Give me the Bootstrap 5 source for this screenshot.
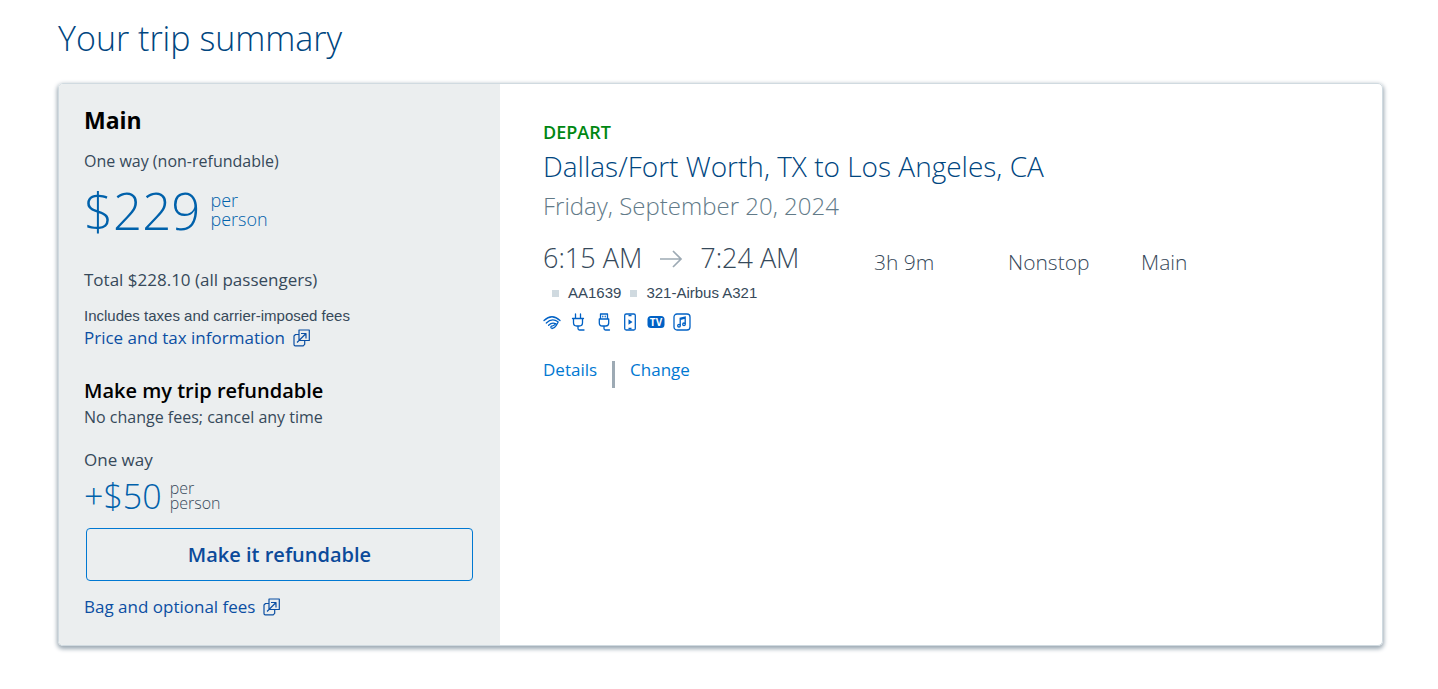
<!DOCTYPE html>
<html lang="en">
<head>
<meta charset="utf-8">
<meta name="viewport" content="width=device-width, initial-scale=1">
<title>Your trip summary</title>
<link href="https://cdn.jsdelivr.net/npm/bootstrap@5.3.0/dist/css/bootstrap.min.css" rel="stylesheet">
<style>
body{font-family:"Open Sans","Noto Sans",sans-serif;font-size:16px;line-height:24px;color:#36495a}
.page{padding:16px 55px 40px 58px}
.page-title{font-size:34px;line-height:45px;font-weight:300;color:#00467f;margin-bottom:22px}
.trip-card{border:1px solid #d0dae0;border-radius:5px;box-shadow:0 2px 4px 1px #9daab4;overflow:hidden}
.fare{background:#ebeeef;padding:19px 25px 26px 25px}
.flight{padding:36px 43px}
.fare h2{font-size:23px;line-height:34px;font-weight:700;color:#000;margin-bottom:12px}
.fare h3{font-size:20px;line-height:28px;font-weight:600;color:#000}
.price{margin-bottom:29px;gap:10px}
.amount{font-size:51px;line-height:58px;font-weight:300;color:#0061ab}
.amount-unit{font-size:18px;line-height:19px;font-weight:300;color:#0061ab}
.extra{font-size:34px;line-height:40px;font-weight:300;color:#0061ab}
.extra-unit{font-size:16px;line-height:15px;font-weight:300}
.plain{font-family:"Liberation Sans",Arial,sans-serif;font-size:15px;line-height:20px}
.mid{font-size:17px}
.total{margin-bottom:14px}
.tax-link{margin-bottom:27px}
.note{margin-bottom:19px}
a{color:#0b4fa3;text-decoration:none}
.btn-refund{--bs-btn-color:#0b4a9a;--bs-btn-border-color:#0078d2;--bs-btn-hover-bg:#0b4a9a;--bs-btn-hover-color:#fff;--bs-btn-border-radius:4px;font-size:20px;line-height:31px;font-weight:600;padding:10px;margin:4px 2px 14px}
.depart{font-size:18px;line-height:24px;font-weight:600;color:#008712}
.route{font-size:28px;line-height:44px;font-weight:300;color:#00467f}
.travel-date{font-size:24px;line-height:36px;font-weight:300;color:#627a88;margin-bottom:14px}
.times{font-size:27px;line-height:40px;font-weight:300;width:331px;gap:17px}
.facts{font-size:21px;line-height:32px;font-weight:300}
.length-cell{width:134px}
.stops-cell{width:133px}
.plane{gap:9px;margin-top:5px;padding-left:9px;margin-bottom:9px}
.dot{width:7px;height:7px;background:#d0dae0}
.amenities{color:#0061c5;margin-bottom:27px}
.actions{gap:15px}
.actions a{color:#0078d2;line-height:22px}
.rule{width:3px;height:27px;margin-top:2px;background:#9daab4}
</style>
</head>
<body>
<svg class="d-none">
  <symbol id="new-window" viewBox="0 0 18 18"><path d="M6 1h10.300v10.500H6zM6 5.500H2.500L1 7v8.500q0 1.300 1.300 1.300h7.900l1.500-1.500v-3.800M4 13.500l8.500-8.500M8 4.500h5v5" fill="none" stroke="currentColor" stroke-width="1.200" stroke-linejoin="round"/></symbol>
</svg>
<main class="page">
<h1 class="page-title">Your trip summary</h1>
<section class="trip-card">
<div class="row g-0">
<div class="col-4 fare">
  <h2>Main</h2>
  <p class="mb-2">One way (non-refundable)</p>
  <div class="price d-flex align-items-center">
    <div class="amount">$229</div>
    <div class="amount-unit"><div>per</div><div>person</div></div>
  </div>
  <p class="mid total">Total $228.10 (all passengers)</p>
  <p class="plain mb-0">Includes taxes and carrier-imposed fees</p>
  <p class="mid tax-link"><a href="#" class="d-inline-flex align-items-center gap-2">Price and tax information
    <svg width="18" height="18"><use href="#new-window"/></svg></a></p>
  <h3 class="mb-0">Make my trip refundable</h3>
  <p class="note">No change fees; cancel any time</p>
  <p class="mid mb-1">One way</p>
  <div class="d-flex align-items-center gap-2 mb-2">
    <div class="extra">+$50</div>
    <div class="extra-unit"><div>per</div><div>person</div></div>
  </div>
  <div class="d-grid"><button type="button" class="btn btn-refund">Make it refundable</button></div>
  <a href="#" class="mid d-inline-flex align-items-center gap-2">Bag and optional fees
    <svg width="18" height="18"><use href="#new-window"/></svg></a>
</div>
<div class="col-8 flight">
  <div class="depart">DEPART</div>
  <h2 class="route mb-0">Dallas/Fort Worth, TX to Los Angeles, CA</h2>
  <div class="travel-date">Friday, September 20, 2024</div>
  <div class="d-flex align-items-end">
    <div class="times d-flex align-items-center">
      <span>6:15 AM</span>
      <svg width="24" height="20" viewBox="0 0 24 20" fill="none" stroke="#9daab4" stroke-width="1.700"><path d="M1 11h21M14 3l8 8-8 8"/></svg>
      <span>7:24 AM</span>
    </div>
    <div class="facts length-cell">3h 9m</div>
    <div class="facts stops-cell">Nonstop</div>
    <div class="facts">Main</div>
  </div>
  <div class="plane plain d-flex align-items-center">
    <span class="dot"></span><span>AA1639</span><span class="dot"></span><span>321-Airbus A321</span>
  </div>
  <div class="amenities d-flex align-items-center gap-2">
    <svg width="18" height="20" viewBox="0 0 18 20" fill="none" stroke="currentColor" stroke-width="1.300" stroke-linecap="round"><path d="M1 8.500Q9 1 17 8.500M3.300 11Q9 5.500 15 9.800M5.600 13.300Q9 9.800 12.800 11.800M8 15.800q-.5-1.800 1.500-2 1.500-.2 3-2M9 16.500q2.500-.2 4.300-3.200l1.900-3.300"/></svg>
    <svg width="18" height="20" viewBox="0 0 18 20" fill="none" stroke="currentColor" stroke-width="1.300" stroke-linecap="round" stroke-linejoin="round"><path d="M6.500 2v4M11.500 2v4M3.500 6.500h11M4.500 6.500v4.300q0 3.200 3.200 3.200h2.600q3.200 0 3.200-3.200V6.500M9 14v2.500q0 1.500 1.500 1.500H15"/></svg>
    <svg width="18" height="20" viewBox="0 0 18 20" fill="none" stroke="currentColor" stroke-width="1.300" stroke-linecap="round" stroke-linejoin="round"><path d="M5.500 7V2h7v5M4.300 7h9.400v4q0 3-3 3H7.300q-3 0-3-3zM7.800 4.200v.6M10.200 4.200v.6M9 14v2.500q0 1.500 1.500 1.500H14.500"/></svg>
    <svg width="18" height="20" viewBox="0 0 18 20" fill="none" stroke="currentColor" stroke-width="1.300"><rect x="3.700" y="2" width="10.600" height="16" rx="1.500"/><path d="M7.500 3.500h3M7.500 16.500h3"/><path d="M7.500 7.300v5.400l4-2.700z" fill="currentColor" stroke="none"/></svg>
    <svg width="18" height="20" viewBox="0 0 18 20"><rect x=".5" y="4" width="17" height="12" rx="3.500" fill="currentColor"/><text x="9" y="13.500" text-anchor="middle" font-size="10" font-weight="700" fill="#fff">TV</text></svg>
    <svg width="18" height="20" viewBox="0 0 18 20" fill="none" stroke="currentColor" stroke-width="1.300"><rect x="1" y="2" width="16" height="16" rx="3"/><path d="M7.200 13.500V6.300l5-1.300v7M7.200 7.300l5-1.300"/><circle cx="6" cy="13.700" r="1.300"/><circle cx="11" cy="12.300" r="1.300"/></svg>
  </div>
  <div class="actions mid d-flex">
    <a href="#">Details</a><span class="rule"></span><a href="#">Change</a>
  </div>
</div>
</div>
</section>
</main>
<script src="https://cdn.jsdelivr.net/npm/bootstrap@5.3.0/dist/js/bootstrap.bundle.min.js"></script>
</body>
</html>
